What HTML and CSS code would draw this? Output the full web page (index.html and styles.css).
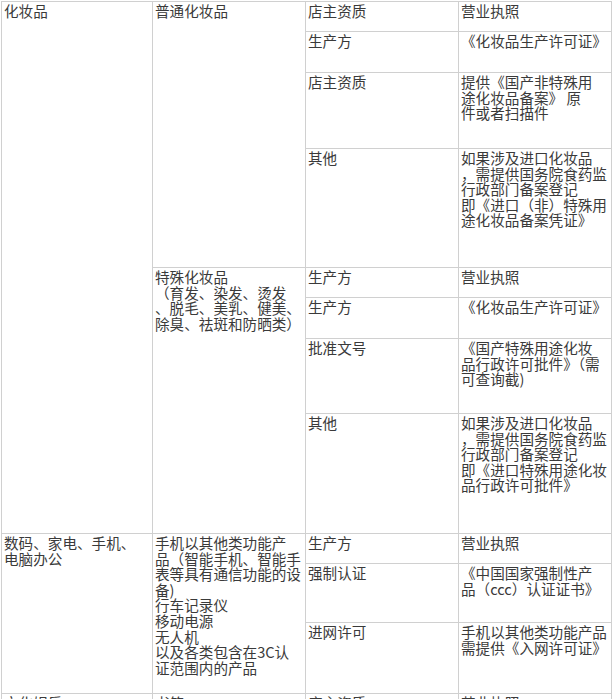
FILE: index.html
```html
<!DOCTYPE html>
<html lang="zh-CN">
<head>
<meta charset="utf-8">
<title>资质要求</title>
<link rel="stylesheet" href="styles.css">
</head>
<body>
<table class="qual">
  <colgroup>
    <col class="c1"><col class="c2"><col class="c3"><col class="c4">
  </colgroup>
  <tbody>
    <tr class="h30">
      <td rowspan="8">化妆品</td>
      <td rowspan="4">普通化妆品</td>
      <td>店主资质</td>
      <td>营业执照</td>
    </tr>
    <tr class="h41">
      <td>生产方</td>
      <td>《化妆品生产许可证》</td>
    </tr>
    <tr class="h76">
      <td>店主资质</td>
      <td>提供《国产非特殊用<br>途化妆品备案》 原<br>件或者扫描件</td>
    </tr>
    <tr class="h119">
      <td>其他</td>
      <td>如果涉及进口化妆品<br>，需提供国务院食药监<br>行政部门备案登记<br>即《进口（非）特殊用<br>途化妆品备案凭证》</td>
    </tr>
    <tr class="h30">
      <td rowspan="4">特殊化妆品<br>（育发、染发、烫发<br>、脱毛、美乳、健美、<br>除臭、祛斑和防晒类）</td>
      <td>生产方</td>
      <td>营业执照</td>
    </tr>
    <tr class="h41">
      <td>生产方</td>
      <td>《化妆品生产许可证》</td>
    </tr>
    <tr class="h75">
      <td>批准文号</td>
      <td>《国产特殊用途化妆<br>品行政许可批件》（需<br>可查询截)</td>
    </tr>
    <tr class="h120">
      <td>其他</td>
      <td>如果涉及进口化妆品<br>，需提供国务院食药监<br>行政部门备案登记<br>即《进口特殊用途化妆<br>品行政许可批件》</td>
    </tr>
    <tr class="h30">
      <td rowspan="3">数码、家电、手机、<br>电脑办公</td>
      <td rowspan="3">手机以其他类功能产<br>品（智能手机、智能手<br>表等具有通信功能的设<br>备)<br>行车记录仪<br>移动电源<br>无人机<br>以及各类包含在3C认<br>证范围内的产品</td>
      <td>生产方</td>
      <td>营业执照</td>
    </tr>
    <tr class="h59">
      <td>强制认证</td>
      <td>《中国国家强制性产<br>品（ccc）认证证书》</td>
    </tr>
    <tr class="h71">
      <td>进网许可</td>
      <td>手机以其他类功能产品<br>需提供《入网许可证》</td>
    </tr>
    <tr class="h30">
      <td>文化娱乐</td>
      <td>书籍</td>
      <td>店主资质</td>
      <td>营业执照</td>
    </tr>
  </tbody>
</table>
</body>
</html>
```
FILE: styles.css
```css
html, body {
  margin: 0;
  padding: 0;
  background: #ffffff;
}

.qual {
  margin: 1px 0 0 1px;
  width: 611px;
  table-layout: fixed;
  border-collapse: collapse;
  font-family: "Noto Sans CJK SC", "Microsoft YaHei", sans-serif;
  font-size: 14.6px;
  line-height: 15.6px;
  color: #3a3a3a;
}

.c1 { width: 151px; }
.c2 { width: 153px; }
.c3 { width: 153px; }
.c4 { width: 153px; }

.qual td {
  border: 1px solid #d0d0d0;
  padding: 1px 0 0 2px;
  vertical-align: top;
  white-space: nowrap;
  overflow: hidden;
}

.h30 { height: 30px; }
.h41 { height: 41px; }
.h59 { height: 59px; }
.h71 { height: 71px; }
.h75 { height: 75px; }
.h76 { height: 76px; }
.h119 { height: 119px; }
.h120 { height: 120px; }
```
